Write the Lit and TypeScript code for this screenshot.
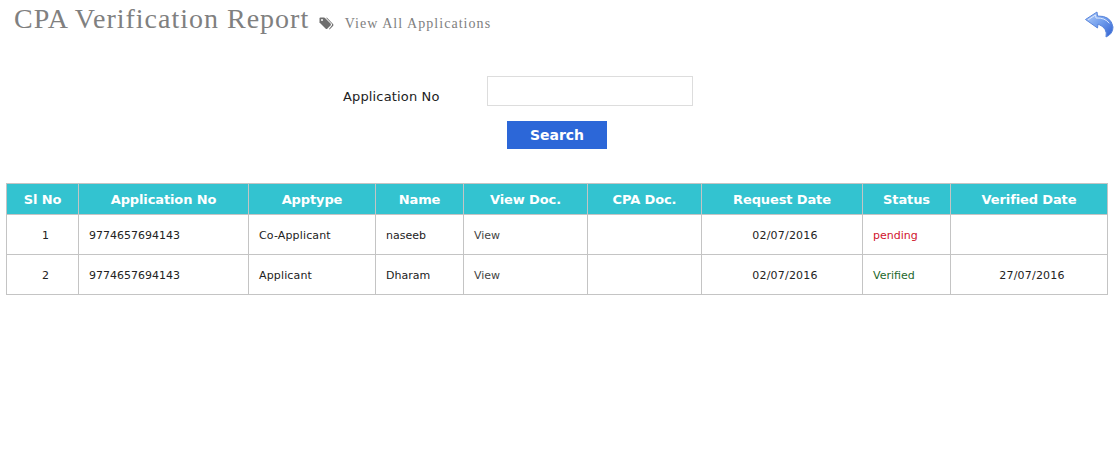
import { LitElement, html, css } from "lit";
import { customElement } from "lit/decorators.js";

const COLS = [72, 170, 127, 88, 124, 114, 161, 88, 157];
const HEAD = ["Sl No", "Application No", "Apptype", "Name", "View Doc.", "CPA Doc.", "Request Date", "Status", "Verified Date"];
const ROWS = [
  ["1", "9774657694143", "Co-Applicant", "naseeb", "pending", ""],
  ["2", "9774657694143", "Applicant", "Dharam", "Verified", "27/07/2016"],
];

@customElement("app-root")
export class AppRoot extends LitElement {
  static styles = css`
    :host { display: block; width: 1117px; height: 462px; background: #fff; overflow: hidden; font-family: "DejaVu Sans", Verdana, sans-serif; }
    .head { display: flex; align-items: flex-start; height: 76px; padding: 3px 3px 0 14px; box-sizing: border-box; }
    h1 { margin: 0; font: 400 28px/31px "Liberation Serif", serif; color: #808080; letter-spacing: 1px; }
    .tag { margin: 14px 10.5px 0 10px; }
    .sub { margin-top: 12px; font: 400 14px/17px "Liberation Serif", serif; color: #808080; letter-spacing: 1.05px; }
    .back { margin-left: auto; margin-top: 4px; }
    .form { display: flex; flex-direction: column; }
    .row { display: flex; align-items: center; height: 30px; padding-left: 343px; }
    label { width: 144px; font-size: 13px; color: #222; padding-top: 10px; letter-spacing: 0.15px; }
    input { width: 206px; height: 30px; box-sizing: border-box; border: 1px solid #ddd; background: #fff; margin: 0; padding: 0; }
    .act { padding: 15px 0 0 507px; }
    button { display: block; width: 100px; height: 28px; border: 0; padding: 0; background: #2c67d8; color: #fff; font: 700 14px "DejaVu Sans", Verdana, sans-serif; }
    table { margin: 34px 0 0 6px; border-collapse: collapse; table-layout: fixed; width: 1101px; font-size: 11px; color: #222; }
    th, td { border: 1px solid #c4c4c4; padding: 2px 10px 0; }
    th { height: 30px; background: #33c3d0; color: #fff; font-size: 13px; font-weight: 700; padding: 0; letter-spacing: -0.12px; }
    td { height: 37px; }
    .c { text-align: center; padding-left: 16px; letter-spacing: 0.2px; }
    .wide { letter-spacing: 0.15px; }
    .view { color: #444; }
    .pending { color: #d0142c; }
    .verified { color: #24682c; }
  `;

  render() {
    return html`
      <div class="head">
        <h1>CPA Verification Report</h1>
        <svg class="tag" width="15" height="13" viewBox="0 0 15 13">
          <path d="M0.5 1.5 L0.5 5.5 L6.5 11.5 Q7.5 12.5 8.5 11.5 L11.5 8.5 Q12.5 7.5 11.5 6.5 L6 1 Q5.5 .5 5 .5 L1.5 .5 Q.5 .5 .5 1.5Z" fill="#6e6e6e"/>
          <path d="M8 .8 L14 7 Q15 8 14 9 L10.5 12.5 L10 12 L12.8 8.6 Q13.5 7.6 12.8 6.8 L7 .8Z" fill="#6e6e6e"/>
          <circle cx="3" cy="3" r="1" fill="#fff"/>
        </svg>
        <span class="sub">View All Applications</span>
        <svg class="back" width="30" height="36" viewBox="0 0 30 36">
          <defs>
            <linearGradient id="g" x1="0" y1="0" x2="1" y2="1">
              <stop offset="0" stop-color="#b4cefa"/>
              <stop offset="0.5" stop-color="#6f9cec"/>
              <stop offset="1" stop-color="#2f5fd0"/>
            </linearGradient>
          </defs>
          <path d="M1.5 12.5 L13 5 L13.5 9 Q27 8.5 29 20 Q29 27 22 30 Q24 21 14 17 L13.5 21 Z" fill="url(#g)" stroke="#5a86dc" stroke-width="1" stroke-linejoin="round"/>
          <path d="M4.5 12.5 L11.5 8 L12 11 Q21 10.5 25 16" fill="none" stroke="#dce8fd" stroke-width="1" stroke-linecap="round" stroke-linejoin="round"/>
        </svg>
      </div>
      <div class="form">
        <div class="row"><label>Application No</label><input type="text" /></div>
        <div class="act"><button>Search</button></div>
      </div>
      <table>
        <colgroup>${COLS.map((w) => html`<col style="width:${w}px" />`)}</colgroup>
        <thead><tr>${HEAD.map((h) => html`<th>${h}</th>`)}</tr></thead>
        <tbody>
          ${ROWS.map(
            (r) => html`<tr>
              <td class="c">${r[0]}</td>
              <td>${r[1]}</td>
              <td class="wide">${r[2]}</td>
              <td>${r[3]}</td>
              <td class="view">View</td>
              <td></td>
              <td class="c">02/07/2016</td>
              <td class=${r[4] === "pending" ? "pending" : "verified"}>${r[4]}</td>
              <td class="c">${r[5]}</td>
            </tr>`
          )}
        </tbody>
      </table>
    `;
  }
}
